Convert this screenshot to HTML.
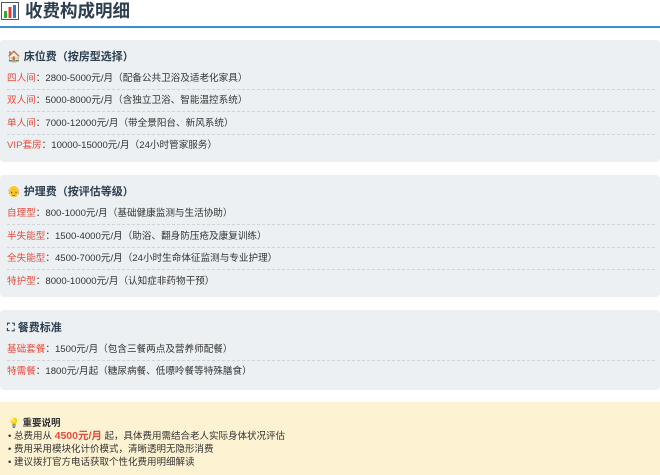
<!DOCTYPE html>
<html><head><meta charset="utf-8"><style>
*{margin:0;padding:0;box-sizing:border-box}
body{width:660px;height:475px;overflow:hidden;background:#fff;font-family:"Liberation Sans","Noto Sans CJK SC",sans-serif;color:#333}
.title{position:absolute;left:0;top:0;height:26px;font-size:17.5px;font-weight:bold;color:#2c3e50;line-height:22px}
.title span{position:absolute;left:25px;top:0px;white-space:nowrap}
.line{position:absolute;left:0;top:26px;width:660px;height:2px;background:#3a8fd4}
.card{position:absolute;left:0;width:660px;background:#ecf0f3;border-radius:4px}
.h{position:absolute;left:7px;font-size:11px;font-weight:bold;color:#2c3e50;white-space:nowrap}
.r{position:absolute;left:7px;width:648px;font-size:9.6px;color:#333;white-space:nowrap;height:22px;line-height:22px;border-bottom:1px dashed #cfd4d8}
.r.last{border-bottom:none}
.r b{font-weight:normal;color:#e74c3c}
.note{position:absolute;left:0;top:402px;width:660px;height:73px;background:#fdf2d2}
.note div{position:absolute;left:8px;font-size:9.5px;color:#333;white-space:nowrap}
</style></head><body>
<div class="title"><svg style="position:absolute;left:1px;top:2px" width="18" height="18"><rect x="0.5" y="0.5" width="17" height="17" fill="#fff" stroke="#555"/><rect x="3" y="9" width="3" height="7" fill="#3a3"/><rect x="7.5" y="5" width="3" height="11" fill="#e33"/><rect x="12" y="3" width="3" height="13" fill="#37c"/></svg><span>收费构成明细</span></div>
<div class="line"></div>

<div class="card" style="top:40px;height:122px">
<div class="h" style="top:8px">🏠 床位费（按房型选择）</div>
<div class="r" style="top:28px"><b>四人间</b>：2800-5000元/月（配备公共卫浴及适老化家具）</div>
<div class="r" style="top:50px"><b>双人间</b>：5000-8000元/月（含独立卫浴、智能温控系统）</div>
<div class="r" style="top:73px"><b>单人间</b>：7000-12000元/月（带全景阳台、新风系统）</div>
<div class="r last" style="top:95px"><b>VIP套房</b>：10000-15000元/月（24小时管家服务）</div>
</div>

<div class="card" style="top:175px;height:122px">
<div class="h" style="top:8px">👴 护理费（按评估等级）</div>
<div class="r" style="top:28px"><b>自理型</b>：800-1000元/月（基础健康监测与生活协助）</div>
<div class="r" style="top:51px"><b>半失能型</b>：1500-4000元/月（助浴、翻身防压疮及康复训练）</div>
<div class="r" style="top:73px"><b>全失能型</b>：4500-7000元/月（24小时生命体征监测与专业护理）</div>
<div class="r last" style="top:96px"><b>特护型</b>：8000-10000元/月（认知症非药物干预）</div>
</div>

<div class="card" style="top:310px;height:80px">
<div class="h" style="top:9px">⛶ 餐费标准</div>
<div class="r" style="top:29px"><b>基础套餐</b>：1500元/月（包含三餐两点及营养师配餐）</div>
<div class="r last" style="top:51px"><b>特需餐</b>：1800元/月起（糖尿病餐、低嘌呤餐等特殊膳食）</div>
</div>

<div class="note">
<div style="top:13px;font-weight:bold">💡 重要说明</div>
<div style="top:26px">• 总费用从 <span style="color:#e74c3c;font-weight:bold;font-size:10.5px">4500元/月</span> 起，具体费用需结合老人实际身体状况评估</div>
<div style="top:39px">• 费用采用模块化计价模式，清晰透明无隐形消费</div>
<div style="top:52px">• 建议拨打官方电话获取个性化费用明细解读</div>
</div>
</body></html>
